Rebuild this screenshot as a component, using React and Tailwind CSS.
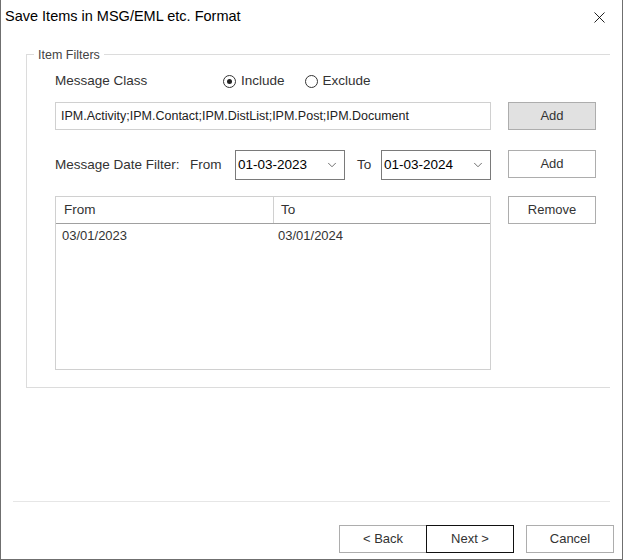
import { X, ChevronDown } from 'lucide-react';

// Save Items wizard page — item filter step.

const FONT = { fontFamily: '"Liberation Sans", Arial, sans-serif' };

function Radio({ checked, label }) {
  return (
    <label className="flex items-center gap-[5px]">
      <span className="w-[13px] h-[13px] rounded-full border border-[#333] bg-white flex items-center justify-center">
        {checked && <span className="w-[5px] h-[5px] rounded-full bg-[#222]" />}
      </span>
      <span className="text-[13.5px] text-[#333]">{label}</span>
    </label>
  );
}

function Combo({ value }) {
  return (
    <div className="w-[110px] h-[30px] border border-[#7a7a7a] bg-white flex items-center pl-[2px] pr-[5px]">
      <span className="flex-1 text-[13.5px] text-black">{value}</span>
      <ChevronDown size={14} strokeWidth={1.3} className="text-[#444]" />
    </div>
  );
}

function Btn({ children, className = '', gray = false }) {
  return (
    <button className={`w-[88px] h-[28px] border text-[13px] text-[#333] flex items-center justify-center ${gray ? 'bg-[#e1e1e1]' : 'bg-white'} ${className}`}>
      {children}
    </button>
  );
}

export default function App() {
  return (
    <div className="w-[623px] h-[560px] bg-white border-l border-r border-b border-[#6f6f6f] flex flex-col" style={FONT}>
      {/* Title bar */}
      <div className="h-[34px] flex items-center justify-between pl-[4px] pr-[13px]">
        <span className="text-[14.5px] text-black">Save Items in MSG/EML etc. Format</span>
        <X size={19} strokeWidth={1.1} className="text-black" />
      </div>

      {/* Group box */}
      <div className="relative mt-[20px] ml-[25px] mr-[12px] h-[334px] border-l border-t border-b border-[#dcdcdc]">
        <span className="absolute -top-[9px] left-[7px] bg-white px-[4px] text-[12.5px] text-[#444]">Item Filters</span>

        <div className="pl-[28px] pt-[16px]">
          <div className="flex items-center h-[20px]">
            <span className="w-[168px] text-[13.5px] text-[#333]">Message Class</span>
            <div className="flex items-center gap-[20px]">
              <Radio checked label="Include" />
              <Radio label="Exclude" />
            </div>
          </div>

          <div className="flex items-start mt-[11px]">
            <div className="w-[436px] h-[28px] border border-[#d0d0d0] flex items-center pl-[5px] text-[12.5px] text-[#222]">
              IPM.Activity;IPM.Contact;IPM.DistList;IPM.Post;IPM.Document
            </div>
            <Btn gray className="ml-[17px] border-[#adadad]">Add</Btn>
          </div>

          <div className="flex items-start mt-[20px]">
            <div className="flex items-center">
              <span className="text-[13.5px] text-[#333] w-[135px]">Message Date Filter:</span>
              <span className="text-[13.5px] text-[#333] w-[45px]">From</span>
              <Combo value="01-03-2023" />
              <span className="text-[13.5px] text-[#333] ml-[12px] w-[24px]">To</span>
              <Combo value="01-03-2024" />
            </div>
            <Btn className="ml-[17px] border-[#adadad]">Add</Btn>
          </div>

          <div className="flex items-start mt-[16px]">
            <div className="w-[436px] h-[174px] border border-[#d0d0d0]">
              <div className="flex h-[27px] border-b border-[#a0a0a0] text-[13.5px] text-[#333]">
                <div className="w-[218px] border-r border-[#d0d0d0] pl-[8px] flex items-center">From</div>
                <div className="flex-1 pl-[7px] flex items-center">To</div>
              </div>
              <div className="flex h-[24px] items-center text-[13px] text-[#333]">
                <span className="w-[222px] pl-[6px]">03/01/2023</span>
                <span>03/01/2024</span>
              </div>
            </div>
            <Btn className="ml-[17px] border-[#adadad]">Remove</Btn>
          </div>
        </div>
      </div>

      {/* Footer */}
      <div className="mt-[113px] ml-[12px] mr-[12px] border-t border-[#e6e6e6]" />
      <div className="flex justify-end pr-[8px] mt-[23px]">
        <Btn className="border-[#adadad]">&lt; Back</Btn>
        <Btn className="border-[#111] -ml-px">Next &gt;</Btn>
        <Btn className="ml-[12px] border-[#adadad]">Cancel</Btn>
      </div>
    </div>
  );
}
